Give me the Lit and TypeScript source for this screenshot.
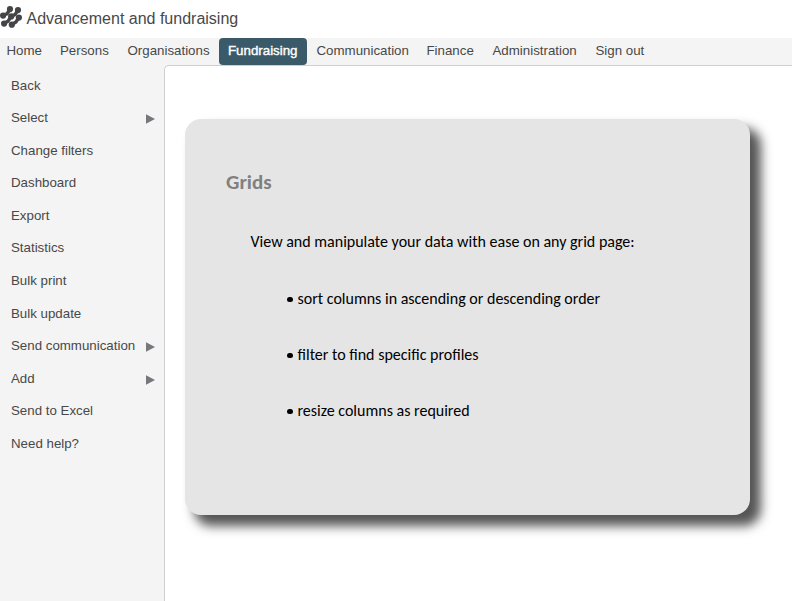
import { LitElement, html, css } from "lit";
import { customElement } from "lit/decorators.js";

interface NavItem { label: string; width: number; active?: boolean }
interface MenuItem { label: string; submenu?: boolean }

const NAV: NavItem[] = [
  { label: "Home", width: 53.5 },
  { label: "Persons", width: 67.5 },
  { label: "Organisations", width: 98 },
  { label: "Fundraising", width: 88, active: true },
  { label: "Communication", width: 110.5 },
  { label: "Finance", width: 66 },
  { label: "Administration", width: 103 },
  { label: "Sign out", width: 67 },
];

const MENU: MenuItem[] = [
  { label: "Back" },
  { label: "Select", submenu: true },
  { label: "Change filters" },
  { label: "Dashboard" },
  { label: "Export" },
  { label: "Statistics" },
  { label: "Bulk print" },
  { label: "Bulk update" },
  { label: "Send communication", submenu: true },
  { label: "Add", submenu: true },
  { label: "Send to Excel" },
  { label: "Need help?" },
];

const TIPS = [
  "sort columns in ascending or descending order",
  "filter to find specific profiles",
  "resize columns as required",
];

@customElement("app-root")
export class AppRoot extends LitElement {
  static styles = css`
    :host {
      display: flex;
      flex-direction: column;
      height: 100vh;
      overflow: hidden;
      background: #fff;
      color: #484848;
      font: 13.3px/20px "Liberation Sans", Arial, sans-serif;
      white-space: nowrap;
    }
    .header {
      display: flex;
      height: 38px;
      flex: none;
    }
    .logo { width: 22px; height: 22px; margin: 6px 4.5px 0 0; flex: none; }
    .title { margin: 0; padding-top: 9px; font-size: 16px; font-weight: 400; line-height: 20px; }
    .nav { display: flex; flex: none; height: 27px; background: #f4f4f4; }
    .tab {
      box-sizing: border-box;
      flex: none;
      padding: 3px 0 0 6.5px;
    }
    .active {
      padding-left: 9px;
      border-radius: 4px;
      background: #3a5a69;
      color: #fff;
      -webkit-text-stroke: 0.4px #fff;
    }
    .active + .tab { padding-left: 9.5px; }
    .active + .tab ~ .tab { padding-left: 9px; }
    .body { display: flex; flex: 1; min-height: 0; background: #f4f4f4; }
    .menu { width: 164px; flex: none; margin: 0; padding: 4.3px 0 0; box-sizing: border-box; list-style: none; }
    .entry {
      display: flex;
      align-items: center;
      justify-content: space-between;
      height: 32.57px;
      padding: 0 9px 0 11px;
    }
    .arrow { width: 9px; height: 10px; margin-top: 2px; fill: #77777b; }
    .content {
      box-sizing: border-box;
      flex: 1;
      border: 1px solid #cfcfcf;
      border-width: 1px 0 0 1px;
      border-top-left-radius: 5px;
      background: #fff;
      padding: 53px 0 0 20px;
    }
    .card {
      box-sizing: border-box;
      width: 565px;
      height: 396px;
      padding: 52px 41px 0;
      border-radius: 16px;
      background: #e5e5e5;
      box-shadow: 10px 10px 11px 1px #555;
      color: #000;
      font: 16px/20px Carlito, Lato, sans-serif;
    }
    .heading { margin: 0; color: #808080; font-size: 21px; font-weight: 700; line-height: 22px; }
    .lead { margin: 39px 0 0 24.5px; }
    .tips { margin: 37px 0 0 61px; padding: 0; list-style: none; display: grid; gap: 36px; }
    .tip { display: flex; align-items: center; gap: 5px; }
    .tip::before { content: ""; width: 5.5px; height: 5.5px; border-radius: 50%; background: #000; margin-top: 1px; }
  `;

  render() {
    return html`
      <header class="header">
        <svg class="logo" viewBox="0 0 22 22" fill="#454547" stroke="#454547">
          <g stroke-width="3.4" fill="none">
            <path d="M10 3 7 7.8 3 9.2M18 4 15 8.6 11.3 10.3 8 15.2 4.3 17.2M19 11.2 16 16 11.8 18.4" />
          </g>
          <g stroke="none">
            <circle cx="10" cy="3.1" r="3.1" /><circle cx="18" cy="4.1" r="3.1" />
            <circle cx="3.1" cy="9.6" r="3.1" /><circle cx="11.2" cy="10.4" r="3.1" />
            <circle cx="18.9" cy="11.6" r="3.1" /><circle cx="4.1" cy="17.6" r="3.1" />
            <circle cx="11.8" cy="18.7" r="3.1" />
          </g>
        </svg>
        <h1 class="title">Advancement and fundraising</h1>
      </header>
      <nav class="nav">
        ${NAV.map((n) => html`<a class="tab ${n.active ? "active" : ""}" style="width:${n.width}px">${n.label}</a>`)}
      </nav>
      <div class="body">
        <ul class="menu">
          ${MENU.map((m) => html`<li class="entry"><span>${m.label}</span>${m.submenu
            ? html`<svg class="arrow" viewBox="0 0 9 10"><path d="M0 0.3 9 5 0 9.7z" /></svg>` : ""}</li>`)}
        </ul>
        <main class="content">
          <section class="card">
            <h2 class="heading">Grids</h2>
            <p class="lead">View and manipulate your data with ease on any grid page:</p>
            <ul class="tips">${TIPS.map((t) => html`<li class="tip">${t}</li>`)}</ul>
          </section>
        </main>
      </div>
    `;
  }
}
